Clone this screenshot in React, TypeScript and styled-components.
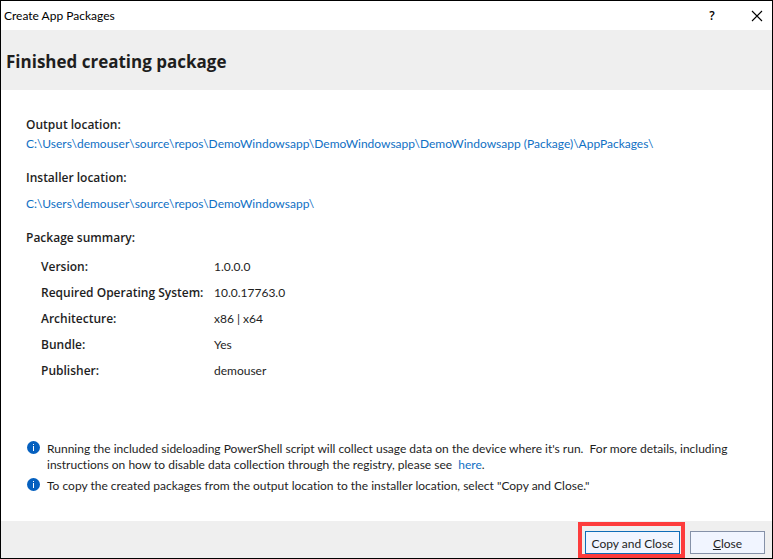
import React from 'react';
import styled, { createGlobalStyle } from 'styled-components';

const boldFamily = '"Open Sans", "Noto Sans", sans-serif';

const GlobalStyle = createGlobalStyle`
  *, *::before, *::after { box-sizing: border-box; }
  body {
    margin: 0;
    background: #fff;
    color: #1e1e1e;
    font: 12px/16px Lato, "Open Sans", sans-serif;
    font-variant-ligatures: none;
  }
  button, a { font: inherit; }
`;

const Dialog = styled.div`
  display: flex;
  flex-direction: column;
  min-height: 100vh;
  border: 1px solid #000;
  background: #fff;
`;

const TitleBar = styled.header`
  display: flex;
  align-items: center;
  justify-content: space-between;
  height: 29px;
  padding: 0 7px 0 3px;
  color: #000;
`;

const WindowControls = styled.div`
  display: flex;
  gap: 29px;
`;

const ControlButton = styled.button`
  display: flex;
  align-items: center;
  justify-content: center;
  width: 16px;
  height: 16px;
  padding: 0;
  border: 0;
  background: none;
  color: #000;
  font-family: ${boldFamily};
  font-weight: 600;
`;

const Banner = styled.div`
  display: flex;
  align-items: center;
  height: 60px;
  padding: 4px 5px 0;
  background: #efefef;
`;

const Heading = styled.h1`
  margin: 0;
  font-family: ${boldFamily};
  font-size: 17px;
  line-height: 24px;
  font-weight: 700;
`;

const Content = styled.main`
  flex: 1;
  padding: 27px 25px 0;
`;

const SectionTitle = styled.h2`
  margin: 0;
  font-family: ${boldFamily};
  font-size: 12px;
  line-height: 16px;
  font-weight: 600;
`;

const Location = styled.section<{ $gap: number }>`
  display: flex;
  flex-direction: column;
  align-items: flex-start;
  gap: ${(p) => p.$gap}px;
  margin-bottom: 18px;
`;

const Link = styled.a`
  color: #1070c4;
  text-decoration: none;
`;

const Summary = styled.dl`
  display: grid;
  grid-template-columns: 158px 1fr;
  gap: 10px 15px;
  margin: 13px 0 0 15px;
`;

const Term = styled.dt`
  font-family: ${boldFamily};
  font-weight: 600;
  white-space: nowrap;
`;

const Value = styled.dd`
  margin: 0;
`;

const Notes = styled.ul`
  display: flex;
  flex-direction: column;
  gap: 5px;
  margin: 62px 0 0;
  padding: 0 0 0 1px;
  list-style: none;
`;

const Note = styled.li`
  display: flex;
  align-items: flex-start;
  gap: 7px;

  svg { flex: none; }
`;

const NoteText = styled.p`
  margin: 0;
  max-width: 700px;
  white-space: pre-wrap;
`;

const Footer = styled.footer`
  display: flex;
  align-items: flex-end;
  justify-content: flex-end;
  gap: 5px;
  height: 37px;
  padding-right: 7px;
  background: #efefef;
`;

const Callout = styled.div`
  padding: 5px 1px 0 3px;
  border: 4px solid #fd3c3c;
`;

const ActionButton = styled.button<{ $primary?: boolean }>`
  width: ${(p) => (p.$primary ? 95 : 75)}px;
  height: 23px;
  margin-bottom: ${(p) => (p.$primary ? 0 : 4)}px;
  padding: 2px 0 0;
  display: block;
  border: 1px solid ${(p) => (p.$primary ? '#0e6cb8' : '#8591a8')};
  background: #f1f5ff;
  color: #1e1e1e;
  line-height: 16px;
  white-space: nowrap;
`;

const InfoIcon = () => (
  <svg width="13" height="14" viewBox="0 0 13 14" aria-hidden="true">
    <circle cx="6.5" cy="6.5" r="6.5" fill="#0560bf" />
    <path d="M6 3h1v1H6zM6 5h1v5H6z" fill="#fff" />
  </svg>
);

const CloseIcon = () => (
  <svg width="12" height="12" viewBox="0 0 12 12" aria-hidden="true">
    <path d="M1 1l10 10M11 1L1 11" stroke="#000" strokeWidth="1.1" fill="none" />
  </svg>
);

const summary = [
  ['Version:', '1.0.0.0'],
  ['Required Operating System:', '10.0.17763.0'],
  ['Architecture:', 'x86 | x64'],
  ['Bundle:', 'Yes'],
  ['Publisher:', 'demouser'],
];

export default function App() {
  return (
    <>
      <GlobalStyle />
      <Dialog role="dialog" aria-label="Create App Packages">
        <TitleBar>
          <span>Create App Packages</span>
          <WindowControls>
            <ControlButton aria-label="Help">?</ControlButton>
            <ControlButton aria-label="Close window"><CloseIcon /></ControlButton>
          </WindowControls>
        </TitleBar>
        <Banner>
          <Heading>Finished creating package</Heading>
        </Banner>
        <Content>
          <Location $gap={3}>
            <SectionTitle>Output location:</SectionTitle>
            <Link href="#output">
              {'C:\\Users\\demouser\\source\\repos\\DemoWindowsapp\\DemoWindowsapp\\DemoWindowsapp (Package)\\AppPackages\\'}
            </Link>
          </Location>
          <Location $gap={10}>
            <SectionTitle>Installer location:</SectionTitle>
            <Link href="#installer">{'C:\\Users\\demouser\\source\\repos\\DemoWindowsapp\\'}</Link>
          </Location>
          <SectionTitle>Package summary:</SectionTitle>
          <Summary>
            {summary.map(([term, value]) => (
              <React.Fragment key={term}>
                <Term>{term}</Term>
                <Value>{value}</Value>
              </React.Fragment>
            ))}
          </Summary>
          <Notes>
            <Note>
              <InfoIcon />
              <NoteText>
                {"Running the included sideloading PowerShell script will collect usage data on the device where it's run.  For more details, including instructions on how to disable data collection through the registry, please see  "}
                <Link href="#details">here</Link>.
              </NoteText>
            </Note>
            <Note>
              <InfoIcon />
              <NoteText>
                To copy the created packages from the output location to the installer location, select "Copy and Close."
              </NoteText>
            </Note>
          </Notes>
        </Content>
        <Footer>
          <Callout>
            <ActionButton $primary>Copy and Close</ActionButton>
          </Callout>
          <ActionButton><u>C</u>lose</ActionButton>
        </Footer>
      </Dialog>
    </>
  );
}
